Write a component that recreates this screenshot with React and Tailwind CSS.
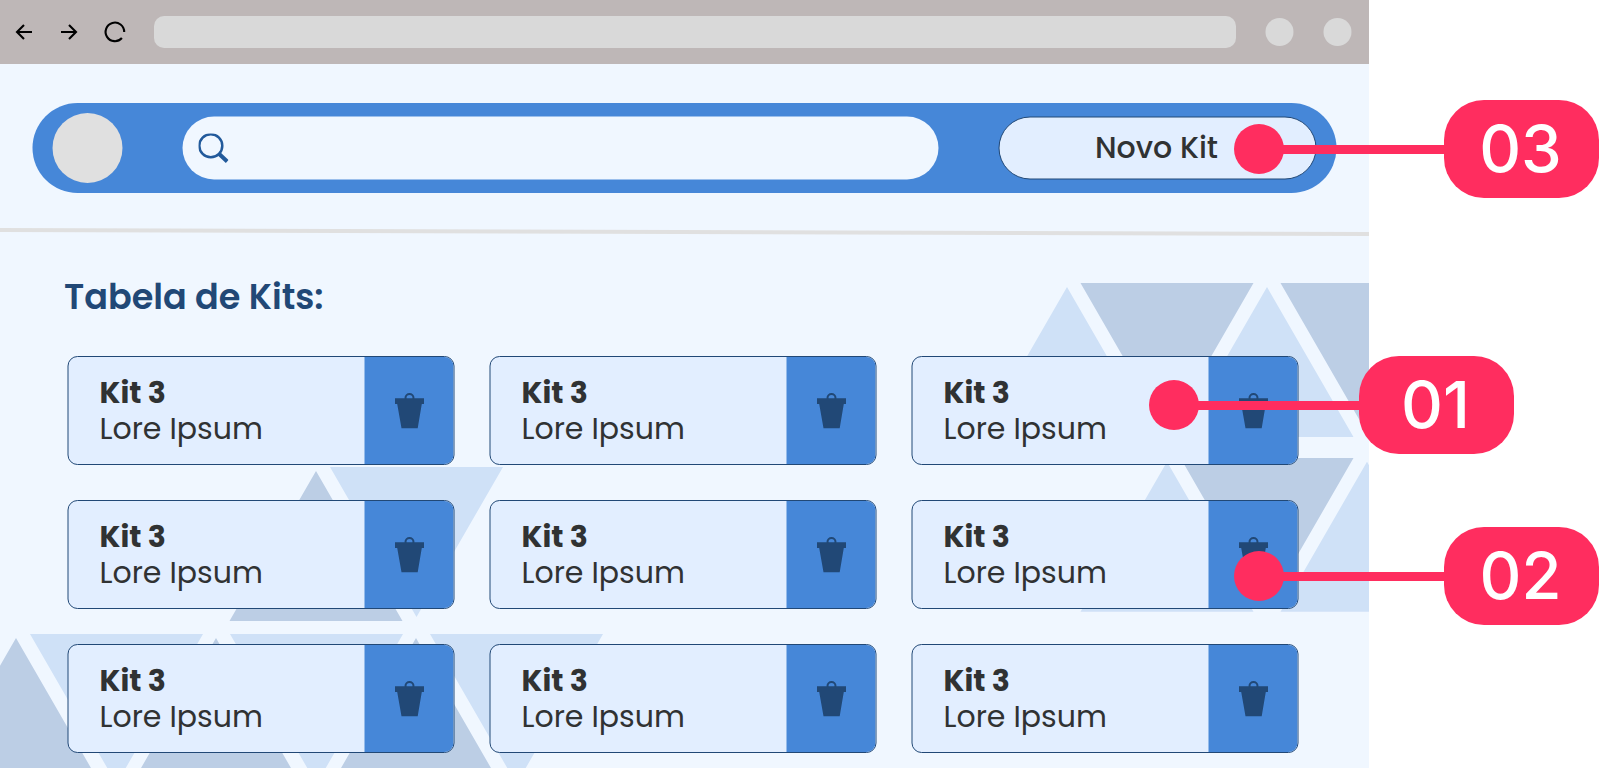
function TriangleBackdrop() {
  const down = (x, y) => `M${x} ${y}h173l-86.5 150z`;
  const up = (x, y) => `M${x} ${y}l86.5 150h-173z`;
  return (
    <svg className="absolute inset-0 h-full w-full" viewBox="0 0 1369 768" aria-hidden="true">
      <g fill="#bccee5">
        <path d={down(1080.5, 283) + down(1280.5, 283) + down(1180.5, 458)} />
        <path d={up(316, 471) + up(16, 638) + up(216, 638) + up(416, 638)} />
      </g>
      <g fill="#cfe1f7">
        <path d={up(1067, 287) + up(1267, 287) + up(1167, 461.7) + up(1367, 461.7)} />
        <path d={down(330, 467) + down(30, 634) + down(230, 634) + down(430, 634)} />
      </g>
    </svg>
  );
}

function BrowserBar() {
  return (
    <div className="flex h-16 items-center bg-[#beb7b7] pr-[17px]">
      <svg className="h-16 w-[154px] shrink-0" viewBox="0 0 154 64" fill="none" stroke="#000" strokeWidth="2.1">
        <path d="M32 32H17M24 25l-7 7 7 7" />
        <path d="M61 32h15M69 25l7 7-7 7" />
        <path d="M124.2 32A9.3 9.3 0 1 0 121.9 38" />
      </svg>
      <div className="mr-[30px] h-8 grow rounded-[10px] bg-[#d9d9d9]" />
      <div className="flex translate-x-[-0.5px] gap-[30px]">
        <div className="size-7 rounded-full bg-[#d9d9d9]" />
        <div className="size-7 rounded-full bg-[#d9d9d9]" />
      </div>
    </div>
  );
}

function Header() {
  return (
    <header className="mt-[39px] ml-8 flex h-[90px] w-[1304px] translate-x-[0.5px] items-center rounded-full bg-[#4687d8] pl-[20px]">
      <div className="size-[70px] rounded-full bg-[#e0e0e0]" />
      <div className="-mt-px ml-[60px] flex h-[63px] w-[756px] translate-y-[0.5px] items-center rounded-full bg-[#f0f7ff] pl-4">
        <svg className="size-[30px]" viewBox="0 0 30 30" fill="none" stroke="#225a9b">
          <circle cx="12.3" cy="12.3" r="11.5" strokeWidth="2.5" />
          <path d="M20.2 20l8.5 8" strokeWidth="4" />
        </svg>
      </div>
      <button className="-mt-px ml-[60px] h-[63px] w-[318px] translate-y-[0.5px] rounded-full border border-[#214876] bg-[#e2eeff] pr-[2px] pb-[2px] text-[30px] font-medium text-[#303233]">
        Novo Kit
      </button>
    </header>
  );
}

function TrashIcon() {
  return (
    <svg className="h-9 w-[30px]" viewBox="0 0 30 36" fill="#214876">
      <circle cx="15" cy="5" r="4" fill="none" stroke="#214876" strokeWidth="2" />
      <path d="M0.5 5.3h29v5.8h-2.2L23.2 35.3H7L2.7 11.1H0.5z" />
    </svg>
  );
}

function KitCard() {
  return (
    <article className="flex h-[109px] overflow-hidden rounded-[10px] border border-[#214876] bg-[#e2eeff] text-[30px] text-[#303233]">
      <div className="w-[296px] pt-[18px] pl-[31px]">
        <h2 className="leading-[35px] font-bold">Kit 3</h2>
        <p className="leading-[37px]">Lore Ipsum</p>
      </div>
      <div className="flex grow items-center justify-center bg-[#4687d8]">
        <TrashIcon />
      </div>
    </article>
  );
}

function Callout({ label, className }) {
  return (
    <div className={`absolute flex items-center ${className}`}>
      <div className="size-[50px] rounded-full bg-[#ff2d5f]" />
      <div className="-ml-1 h-[9px] w-[165px] bg-[#ff2d5f]" />
      <div className="-ml-px flex h-[98px] w-[155px] items-center justify-center rounded-[40px] bg-[#ff2d5f] pr-[2px] font-[Inter,sans-serif] text-[65px] font-medium text-white">
        {label}
      </div>
    </div>
  );
}

export default function App() {
  return (
    <div className="relative h-[768px] w-[1599px] overflow-hidden bg-white font-[Poppins,Inter,sans-serif]">
      <main className="relative h-full w-[1369px] overflow-hidden bg-[#f0f7ff]">
        <TriangleBackdrop />
        <div className="relative">
          <BrowserBar />
          <Header />
          <svg className="mt-[34px] block h-[10px] w-full" viewBox="0 0 1369 10">
            <path d="M0 3L1369 7" stroke="#e0e0e0" strokeWidth="4" />
          </svg>
          <h1 className="mt-[35px] pl-16 text-[35px] leading-[50px] font-semibold text-[#214876]">Tabela de Kits:</h1>
          <section className="mt-[34px] ml-[67px] grid w-[1231px] translate-x-[0.5px] grid-cols-3 gap-[35px]">
            {Array.from({ length: 9 }, (_, i) => (
              <KitCard key={i} />
            ))}
          </section>
        </div>
      </main>
      <Callout label="03" className="top-[100px] left-[1234px]" />
      <Callout label="01" className="top-[356px] left-[1149px]" />
      <Callout label="02" className="top-[527px] left-[1234px]" />
    </div>
  );
}
